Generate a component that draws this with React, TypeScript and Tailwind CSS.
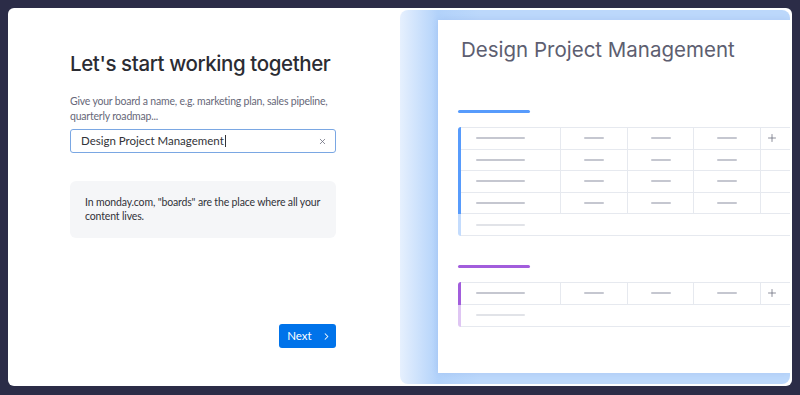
import { ChevronRight, Plus, X } from "lucide-react";

const heading = { fontFamily: "Inter, 'Noto Sans', sans-serif" };
const body = { fontFamily: "Lato, 'Noto Sans', sans-serif" };

function Cell({ kind }: { kind: "first" | "mid" | "plus" | "empty" }) {
  if (kind === "plus") {
    return (
      <div className="flex h-full items-center pl-[5px] text-[#676879]">
        <Plus size={12} strokeWidth={1.5} />
      </div>
    );
  }
  if (kind === "empty") return <div />;
  return (
    <div
      className={`flex h-full items-center border-r border-[#e6e9ef] ${
        kind === "first" ? "pl-[15px]" : "justify-center"
      }`}
    >
      <div className={`h-[2px] rounded-full bg-[#c5c7d0] ${kind === "first" ? "w-[49px]" : "w-[20px]"}`} />
    </div>
  );
}

function Row({ plus }: { plus?: boolean }) {
  return (
    <div className="grid h-[21.5px] grid-cols-[100px_67px_66px_67px_1fr] border-b border-[#e6e9ef]">
      <Cell kind="first" />
      <Cell kind="mid" />
      <Cell kind="mid" />
      <Cell kind="mid" />
      <Cell kind={plus ? "plus" : "empty"} />
    </div>
  );
}

function Group({ color, faded, rows }: { color: string; faded: string; rows: number }) {
  return (
    <div className="flex">
      <div className="flex w-[3px] flex-col overflow-hidden rounded-l-[4px]">
        <div className={`flex-1 ${color}`} />
        <div className={`h-[22px] ${faded}`} />
      </div>
      <div className="flex-1 border-t border-[#e6e9ef]">
        {Array.from({ length: rows }).map((_, i) => (
          <Row key={i} plus={i === 0} />
        ))}
        <div className="flex h-[22px] items-center border-b border-[#e6e9ef] pl-[15px]">
          <div className="h-[2px] w-[49px] rounded-full bg-[#e1e3e8]" />
        </div>
      </div>
    </div>
  );
}

export default function App() {
  return (
    <div className="h-[395px] w-[800px] bg-[#2b2c47] p-2" style={heading}>
      <div className="flex h-[378px] overflow-hidden rounded-[6px] bg-white">
        <div className="flex w-[392px] flex-col pl-[62px] pr-[64px] pt-[42px] pb-[38px]">
          <h1 className="whitespace-nowrap text-[20.5px] font-medium leading-[28px] tracking-[-0.4px] text-[#2b2c33]">
            Let's start working together
          </h1>
          <p className="mt-[16px] text-[10.5px] leading-[15px] tracking-[-0.2px] text-[#676879]" style={body}>
            Give your board a name, e.g. marketing plan, sales pipeline, quarterly roadmap...
          </p>
          <div className="mt-[5px] flex h-[24px] items-center justify-between rounded-[3px] border border-[#7aa7e3] pl-[10px] pr-[8px]">
            <span className="text-[11.5px] text-[#323338]" style={body}>
              Design Project Management<span className="ml-[1px] inline-block h-[12px] w-px translate-y-[2px] bg-[#323338]" />
            </span>
            <X size={9} strokeWidth={2} className="text-[#676879]" />
          </div>
          <div
            className="mt-[28px] rounded-[6px] bg-[#f5f6f8] pl-[15px] pr-[8px] pt-[14px] pb-[15px] text-[10.5px] leading-[14px] tracking-[-0.15px] text-[#323338]"
            style={body}
          >
            In monday.com, "boards" are the place where all your content lives.
          </div>
          <div className="mt-auto flex justify-end">
            <button
              className="flex h-[24px] w-[57px] items-center justify-center gap-[9px] rounded-[3px] bg-[#0073ea] pl-[4px] text-[11.5px] text-white"
              style={body}
            >
              Next
              <ChevronRight size={11} strokeWidth={2.2} />
            </button>
          </div>
        </div>
        <div className="my-[2px] mr-[2px] flex-1 overflow-hidden rounded-[8px] bg-[linear-gradient(90deg,#e6f0fe_0px,#b2d2fa_38px,#bcd8fb_80px)] pt-[10px] pb-[11px] pl-[38px]">
          <div className="h-full bg-white pl-[20px] pt-[16px] shadow-[0_0_6px_rgba(80,120,200,0.15)]">
            <div className="pl-[3px] text-[20.5px] leading-[28px] text-[#5d5e70]">
              Design Project Management
            </div>
            <div className="mt-[46px] h-[3px] w-[72px] rounded-full bg-[#579bfc]" />
            <div className="mt-[14px]">
              <Group color="bg-[#579bfc]" faded="bg-[#c4dcfd]" rows={4} />
            </div>
            <div className="mt-[29px] h-[3px] w-[72px] rounded-full bg-[#a25ddc]" />
            <div className="mt-[14px]">
              <Group color="bg-[#a25ddc]" faded="bg-[#dfc6f3]" rows={1} />
            </div>
          </div>
        </div>
      </div>
    </div>
  );
}
